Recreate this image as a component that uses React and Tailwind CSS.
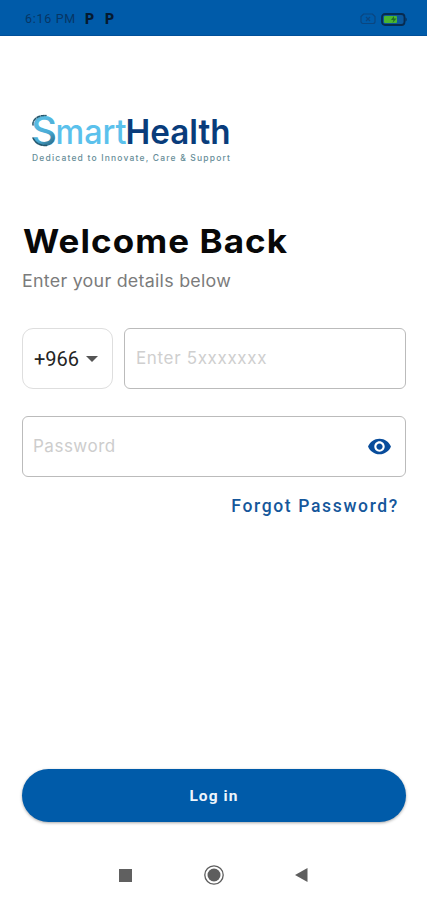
import { useState } from "react";

function StatusBar() {
    return (
        <div className="flex h-9 w-full items-center border-b border-[#00509a] bg-[#005ba9] pt-[3px] pr-[19px] pl-[25px]">
            <p className="w-[58px] font-[Roboto] text-[12.5px] leading-none tracking-[0.7px] whitespace-nowrap text-[#073665]">6:16 PM</p>
            <p className="ml-0.5 w-[20px] font-[Roboto] text-[14px] leading-none font-black text-[#051a30]">P</p>
            <p className="font-[Roboto] text-[14px] leading-none font-black text-[#051a30]">P</p>
            <svg className="ml-auto" width="16" height="12" viewBox="0 0 16 12" fill="none" stroke="#0a4680" strokeWidth="1.2">
                <path d="M3.5 1h9L15 3.5v5a2 2 0 0 1-2 2H3a2 2 0 0 1-2-2v-5z" />
                <path d="M6 4l4 4M10 4L6 8" />
            </svg>
            <svg className="ml-[5px]" width="27" height="13" viewBox="0 0 27 13">
                <rect x="1" y="1" width="22.5" height="11" rx="3" fill="#0b579b" stroke="#072b50" strokeWidth="1.8" />
                <path d="M24.5 4.5c1.6.4 1.6 3.6 0 4z" fill="#072b50" />
                <rect x="3" y="3" width="13" height="7" rx="1" fill="#49b52f" />
                <path d="M13 3l-3 4h2.5l-1 3 4-4.5h-2.5z" fill="#226c25" />
            </svg>
        </div>
    )
}

function Logo() {
    return (
        <svg className="-ml-0.5" width="240" height="60" viewBox="20 108 240 60" fontFamily="Inter, sans-serif">
            <defs>
                <linearGradient id="swirl" x1="0" y1="0" x2="0.4" y2="1">
                    <stop offset="0" stopColor="#347d98" />
                    <stop offset="0.35" stopColor="#58bce3" />
                    <stop offset="0.7" stopColor="#4aabd5" />
                    <stop offset="1" stopColor="#2a657e" />
                </linearGradient>
            </defs>
            <text x="31" y="144.5" fontSize="39.5" fontWeight="500" fill="url(#swirl)" textLength="26" lengthAdjust="spacingAndGlyphs">S</text>
            {/* loose strands around the S */}
            <g fill="none" stroke="#24566b" strokeWidth="1.5" strokeLinecap="round" strokeDasharray="3 1.5">
                <path d="M33 125c-1-6 6-10 13-9.5" />
                <path d="M33 138c3 6 9 8 14 7.5" />
            </g>
            <text x="55.5" y="144" fontSize="34" fontWeight="500" fill="#5bc1ec" textLength="71" lengthAdjust="spacingAndGlyphs">mart</text>
            <text x="125.5" y="144" fontSize="34" fontWeight="600" fill="#093c7b" textLength="105" lengthAdjust="spacingAndGlyphs">Health</text>
            <text x="32" y="160.5" fontSize="8.5" fontWeight="500" fill="#668d98" textLength="198">Dedicated to Innovate, Care &amp; Support</text>
        </svg>
    )
}

function NavigationBar() {
    return (
        <div className="mt-10 flex h-[26px] items-center pl-[119px]">
            <div className="h-[13px] w-[13px] bg-[#606060]" />
            <svg className="ml-[71px]" width="22" height="22" viewBox="0 0 22 22">
                <circle cx="11" cy="11" r="9.2" fill="none" stroke="#5e5e5e" strokeWidth="1.3" />
                <circle cx="11" cy="11" r="6.5" fill="#5e5e5e" />
            </svg>
            <svg className="ml-[70px]" width="13" height="14" viewBox="0 0 13 14">
                <path d="M12.5 0v14L0 7z" fill="#5e5e5e" />
            </svg>
        </div>
    )
}

export default function App() {
    const [showPassword, setShowPassword] = useState(false)

    return (
        <div className="flex h-[900px] w-[427px] flex-col overflow-hidden bg-white">
            <StatusBar />
            <div className="flex flex-col pt-[72px] pr-[21px] pl-[22px]">
                <Logo />
                <h1 className="mt-[53px] ml-px w-fit origin-left scale-x-106 font-[Inter] text-[33px] leading-10 font-bold tracking-[1px] whitespace-nowrap text-[#080808]">Welcome Back</h1>
                <p className="mt-2 w-fit origin-left scale-x-105 font-[Inter] text-[17px] leading-6 tracking-[0.25px] whitespace-nowrap text-[#7b7b7b]">Enter your details below</p>

                <div className="mt-[35px] flex h-[61px] gap-[11px]">
                    <button className="flex w-[91px] shrink-0 items-center rounded-[11px] border border-[#dedede] pl-[11px]">
                        <span className="pt-px font-[Roboto] text-[20px] leading-6 text-[#242424]">+966</span>
                        <svg className="ml-[7px]" width="12" height="6" viewBox="0 0 12 6">
                            <path d="M0 0h12L6 6z" fill="#555" />
                        </svg>
                    </button>
                    <input
                        type="tel"
                        placeholder="Enter 5xxxxxxx"
                        className="min-w-0 flex-1 rounded-[6px] border-[1.5px] border-[#bbb] px-[11px] font-[Inter] text-[17px] tracking-[0.65px] placeholder:text-[#cfcfcf]"
                    />
                </div>

                <div className="mt-[27px] flex h-[61px] items-center rounded-[6px] border-[1.5px] border-[#bbb] pr-[13px] pl-[10px]">
                    <input
                        type={showPassword ? "text" : "password"}
                        placeholder="Password"
                        className="min-w-0 flex-1 font-[Inter] text-[17px] tracking-[0.5px] placeholder:text-[#cdcdcd]"
                    />
                    <button onClick={() => setShowPassword((value) => !value)}>
                        <svg width="25" height="25" viewBox="0 0 24 24" fill="#084c9b">
                            <path d="M12 4.5C7 4.5 2.73 7.61 1 12c1.73 4.39 6 7.5 11 7.5s9.27-3.11 11-7.5c-1.73-4.39-6-7.5-11-7.5zM12 17c-2.76 0-5-2.24-5-5s2.24-5 5-5 5 2.24 5 5-2.24 5-5 5zm0-8c-1.66 0-3 1.34-3 3s1.34 3 3 3 3-1.34 3-3-1.34-3-3-3z" />
                        </svg>
                    </button>
                </div>

                <a className="mt-[17px] mr-[7px] self-end font-[Roboto] text-[17.5px] leading-6 font-medium tracking-[1.65px] text-[#15579b]">Forgot Password?</a>
            </div>

            <button className="mt-auto mr-[21px] ml-[22px] h-[53px] shrink-0 rounded-full bg-[#005ba9] pt-[3px] font-[Roboto] text-[15.5px] font-bold tracking-[1.1px] text-[#edf5fc] shadow-[0_1px_3px_rgba(0,0,0,0.35)]">Log in</button>
            <div className="h-[78px] shrink-0">
                <NavigationBar />
            </div>
        </div>
    )
}
